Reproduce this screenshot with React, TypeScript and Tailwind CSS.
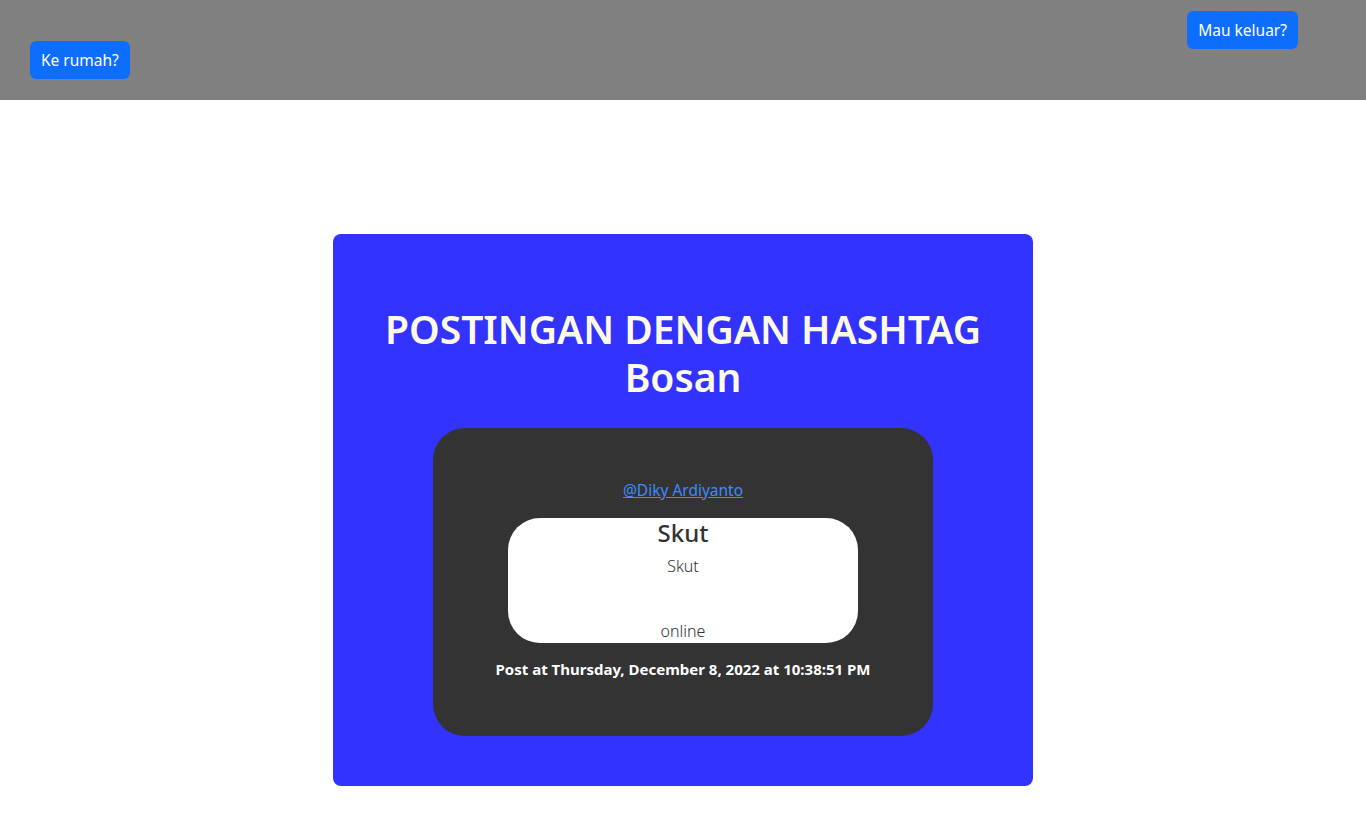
const App = () => {
  return (
    <div className="min-h-screen w-full bg-white font-['Noto_Sans',sans-serif]">
      <div className="h-[100px] bg-[#808080] flex justify-between px-[30px]">
        <div className="pt-[41px]">
          <button className="bg-[#0d6efd] text-white text-[15.5px] leading-6 px-[11px] py-[7px] rounded-md">
            Ke rumah?
          </button>
        </div>
        <div className="pt-[11px] pr-[38px]">
          <button className="bg-[#0d6efd] text-white text-[15.5px] leading-6 px-[11px] py-[7px] rounded-md">
            Mau keluar?
          </button>
        </div>
      </div>

      <div className="flex justify-center pt-[134px]">
        <div className="w-[700px] bg-[#3333ff] rounded-lg pt-[71px] pb-[50px] flex flex-col items-center">
          <h1 className="text-[39px] leading-[48px] font-semibold text-[#fdfaea] text-center">
            POSTINGAN DENGAN HASHTAG
            <br />
            Bosan
          </h1>

          <div className="mt-[27px] w-[500px] bg-[#333333] rounded-[32px] pt-[50px] pb-[55px] flex flex-col items-center">
            <a href="#" className="text-[#3d8bfd] underline text-[15.5px] leading-6">
              @Diky Ardiyanto
            </a>
            <div className="mt-4 w-[350px] h-[125px] bg-white rounded-[32px] flex flex-col items-center text-[#333333]">
              <h2 className="text-2xl leading-[30px] font-medium">Skut</h2>
              <p className="mt-[6px] text-base leading-6 font-light">Skut</p>
              <p className="mt-auto text-base leading-6 font-light">online</p>
            </div>
            <p className="mt-[14px] text-white font-bold text-[15px] leading-6">
              Post at Thursday, December 8, 2022 at 10:38:51 PM
            </p>
          </div>
        </div>
      </div>
    </div>
  );
};

export default App;
